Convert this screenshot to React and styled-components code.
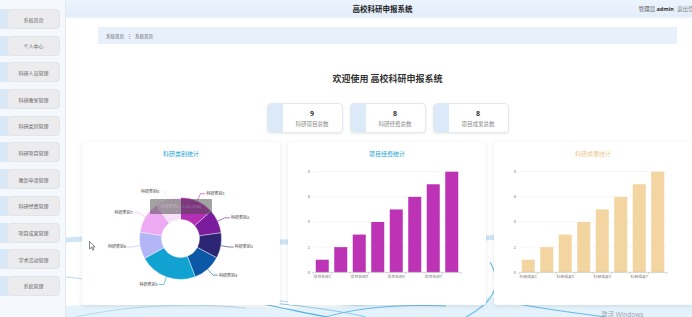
import styled, { createGlobalStyle } from "styled-components";

const GlobalStyle = createGlobalStyle`
  html, body {
    margin: 0;
    overflow: hidden;
    background: #fff;
    font-family: "Noto Sans CJK SC", "Noto Sans", sans-serif;
  }
`;

const menus = [
  "系统首页",
  "个人中心",
  "科研人员管理",
  "科研教室管理",
  "科研类别管理",
  "科研项目管理",
  "教案申请管理",
  "科研经费管理",
  "项目成果管理",
  "学术活动管理",
  "系统管理",
];

const stats = [
  { num: 9, label: "科研项目总数" },
  { num: 8, label: "科研经费总数" },
  { num: 8, label: "项目成果总数" },
];

const pieData = [
  { name: "科研类别1", from: 0, to: 48, color: "#b32fb4" },
  { name: "科研类别2", from: 48, to: 82, color: "#7a1c9d" },
  { name: "科研类别3", from: 82, to: 118, color: "#2c2573" },
  { name: "科研类别4", from: 118, to: 159, color: "#0b59a6" },
  { name: "科研类别5", from: 159, to: 241, color: "#12a2d2" },
  { name: "科研类别6", from: 241, to: 279, color: "#b2b6f6" },
  { name: "科研类别7", from: 279, to: 324, color: "#eea9f3" },
  { name: "科研类别8", from: 324, to: 360, color: "#f7e0f7" },
];

const Page = styled.div`
  display: flex;
  width: 709px;
  height: 317px;
  position: relative;
`;

const Sidebar = styled.aside`
  width: 66px;
  flex-shrink: 0;
  background: #f5f8fc;
  border-right: 1px solid #e1e8f1;
  padding-top: 9px;
  display: flex;
  flex-direction: column;
  gap: 6.7px;
  box-sizing: border-box;
`;

const MenuItem = styled.div`
  display: flex;
  height: 20px;
`;

const MenuTab = styled.div`
  width: 9px;
  margin-right: -2px;
  background: #d9e8f9;
  border-radius: 0 3px 3px 0;
`;

const MenuButton = styled.div`
  width: 53px;
  background: #ececef;
  border: 1px solid #e2e4e9;
  border-radius: 4px;
  box-sizing: border-box;
  display: flex;
  align-items: center;
  justify-content: center;
  font-size: 5px;
  color: #666;
  position: relative;
`;

const Main = styled.main`
  flex: 1;
  position: relative;
  background: #fff;
  overflow: hidden;
`;

const Content = styled.div`
  position: relative;
  z-index: 1;
`;

const Header = styled.header`
  height: 17px;
  background: linear-gradient(180deg, #ecf4fd, #e3edfa);
  display: grid;
  grid-template-columns: 1fr auto 1fr;
  align-items: center;
  padding-right: 10px;
  box-shadow: 0 1px 2px rgba(120, 150, 190, 0.15);
`;

const Title = styled.h1`
  grid-column: 2;
  margin: 0;
  font-size: 7.5px;
  font-weight: 700;
  color: #222;
`;

const User = styled.div`
  justify-self: end;
  font-size: 5.5px;
  color: #555;
  white-space: nowrap;
  b {
    color: #333;
    font-family: "Open Sans", sans-serif;
  }
  span {
    margin-left: 3px;
    color: #888;
  }
`;

const Crumb = styled.div`
  margin: 10px 32px 0;
  height: 17px;
  background: #e7f0fb;
  display: flex;
  align-items: center;
  padding-left: 8px;
  font-size: 4.5px;
  color: #666;
  gap: 3px;
`;

const Welcome = styled.h2`
  margin: 29px 0 0;
  text-align: center;
  font-size: 9px;
  line-height: 12px;
  font-weight: 700;
  color: #333;
`;

const StatRow = styled.div`
  display: flex;
  justify-content: center;
  gap: 7px;
  margin-top: 18px;
`;

const StatCard = styled.div`
  width: 76px;
  height: 30px;
  display: flex;
  border: 1px solid #e4e9ef;
  border-radius: 4px;
  overflow: hidden;
  box-sizing: border-box;
  box-shadow: 0 1px 3px rgba(0, 0, 0, 0.08);
  background: #fff;
`;

const StatSide = styled.div`
  width: 15px;
  background: #dbe9f9;
`;

const StatBody = styled.div`
  flex: 1;
  display: flex;
  flex-direction: column;
  align-items: center;
  justify-content: center;
  gap: 4px;
`;

const StatNum = styled.div`
  font-family: "Open Sans", sans-serif;
  font-size: 7px;
  line-height: 7px;
  font-weight: 700;
  color: #333;
`;

const StatLabel = styled.div`
  font-size: 5.5px;
  line-height: 6px;
  color: #888;
`;

const ChartRow = styled.div`
  display: flex;
  gap: 8px;
  margin-top: 9px;
  padding-left: 16px;
`;

const ChartCard = styled.section`
  width: 198px;
  height: 163px;
  flex-shrink: 0;
  background: #fff;
  border-radius: 3px;
  box-shadow: 0 1px 4px rgba(0, 0, 0, 0.1);
  padding-top: 9px;
  box-sizing: border-box;
`;

const ChartTitle = styled.div`
  text-align: center;
  font-size: 6px;
  line-height: 6px;
  color: ${(p) => p.color};
`;

const ChartSvg = styled.svg`
  display: block;
  margin-top: 5px;
  font-family: "Noto Sans CJK SC", sans-serif;
`;

const Backdrop = styled.svg`
  position: absolute;
  left: 0;
  top: 0;
  z-index: 0;
`;

const Watermark = styled.div`
  position: absolute;
  left: 601px;
  top: 309px;
  font-family: "Open Sans", "Noto Sans CJK SC", sans-serif;
  font-size: 6.5px;
  color: #9aa3ad;
  z-index: 2;
`;

const Cursor = styled.svg`
  position: absolute;
  left: 89px;
  top: 241px;
  z-index: 2;
`;

function pt(cx, cy, r, deg) {
  const a = (deg * Math.PI) / 180;
  return [cx + r * Math.sin(a), cy - r * Math.cos(a)];
}

function sector(cx, cy, r0, r1, a0, a1) {
  const [x1, y1] = pt(cx, cy, r1, a0);
  const [x2, y2] = pt(cx, cy, r1, a1);
  const [x3, y3] = pt(cx, cy, r0, a1);
  const [x4, y4] = pt(cx, cy, r0, a0);
  const big = a1 - a0 > 180 ? 1 : 0;
  return `M${x1} ${y1} A${r1} ${r1} 0 ${big} 1 ${x2} ${y2} L${x3} ${y3} A${r0} ${r0} 0 ${big} 0 ${x4} ${y4} Z`;
}

function PieChart() {
  const cx = 98.5;
  const cy = 76.5;
  return (
    <ChartSvg width="198" height="143">
      {pieData.map((d) => (
        <path
          key={d.name}
          d={sector(cx, cy, 19, 41, d.from, d.to)}
          fill={d.color}
          stroke="#fff"
          strokeWidth="0.4"
        />
      ))}
      {pieData.map((d) => {
        const mid = (d.from + d.to) / 2;
        const [ex, ey] = pt(cx, cy, 41, mid);
        const [ox, oy] = pt(cx, cy, 49, mid);
        const right = ox > cx;
        const hx = right ? ox + 5 : ox - 5;
        return (
          <g key={d.name + "l"}>
            <polyline
              points={`${ex},${ey} ${ox},${oy} ${hx},${oy}`}
              fill="none"
              stroke={d.color}
              strokeWidth="0.6"
            />
            <text
              x={right ? hx + 1 : hx - 1}
              y={oy + 1.4}
              fontSize="4"
              fill="#444"
              textAnchor={right ? "start" : "end"}
            >
              {d.name}
            </text>
          </g>
        );
      })}
      <rect x="68" y="37" width="62" height="15" rx="1" fill="rgba(70,70,70,0.5)" />
      <text x="99" y="46" fontSize="4" fill="rgba(255,255,255,0.35)" textAnchor="middle">
        科研类别1 : 1 (11.11%)
      </text>
    </ChartSvg>
  );
}

function BarChart(props) {
  const x0 = 25;
  const x1 = 173;
  const y0 = 110.3;
  const unit = 12.575;
  const step = (x1 - x0) / 8;
  const vals = [1, 2, 3, 4, 5, 6, 7, 8];
  return (
    <ChartSvg width="198" height="143">
      {[2, 4, 6, 8].map((v) => (
        <line key={v} x1={x0} x2={x1} y1={y0 - v * unit} y2={y0 - v * unit} stroke="#eeeeee" strokeWidth="0.6" />
      ))}
      {[0, 2, 4, 6, 8].map((v) => (
        <text key={"y" + v} x={x0 - 3} y={y0 - v * unit + 1.4} fontSize="4" fill="#777" textAnchor="end">
          {v}
        </text>
      ))}
      {vals.map((v, i) => (
        <rect
          key={i}
          x={x0 + step * i + (step - 13) / 2}
          y={y0 - v * unit}
          width="13"
          height={v * unit}
          fill={props.color}
        />
      ))}
      <line x1={x0} x2={x1} y1={y0} y2={y0} stroke="#b9b9b9" strokeWidth="0.6" />
      {Array.from({ length: 9 }).map((_, i) => (
        <line key={"t" + i} x1={x0 + step * i} x2={x0 + step * i} y1={y0} y2={y0 + 2} stroke="#b9b9b9" strokeWidth="0.6" />
      ))}
      {[0, 2, 4, 6].map((i) => (
        <text key={"x" + i} x={x0 + step * (i + 0.5)} y={y0 + 6} fontSize="3.8" fill="#777" textAnchor="middle">
          {props.prefix + (i + 1)}
        </text>
      ))}
    </ChartSvg>
  );
}

function Waves() {
  return (
    <Backdrop width="643" height="317">
      <path d="M0 240 C 120 232, 260 252, 420 238 S 600 226, 643 232" fill="none" stroke="#cfe5f8" strokeWidth="5" />
      <path d="M0 277 C 120 290, 300 322, 460 296 S 600 262, 643 270" fill="none" stroke="#9fd0ef" strokeWidth="0.8" />
      <path d="M0 317 L0 306 C 100 300, 200 314, 320 304 S 520 296, 643 306 L643 317 Z" fill="#e3f2fb" />
      <path d="M190 303 C 220 308, 240 314, 262 317" fill="none" stroke="#5db3e4" strokeWidth="1.2" />
      <path d="M205 303 C 240 306, 280 312, 300 317" fill="none" stroke="#8dcaee" strokeWidth="1" />
      <path d="M260 317 C 290 308, 330 304, 380 306" fill="none" stroke="#6bbbe8" strokeWidth="1" />
      <path d="M400 317 C 420 306, 440 290, 424 262" fill="none" stroke="#7ec3ea" strokeWidth="1.4" />
      <path d="M430 300 C 460 306, 500 312, 540 317" fill="none" stroke="#67b7e6" strokeWidth="1" />
      <path d="M10 317 C 60 306, 120 302, 180 308" fill="none" stroke="#b5dbf3" strokeWidth="1" />
    </Backdrop>
  );
}

export default function App() {
  return (
    <>
      <GlobalStyle />
      <Page>
        <Sidebar>
          {menus.map((m) => (
            <MenuItem key={m}>
              <MenuTab />
              <MenuButton>{m}</MenuButton>
            </MenuItem>
          ))}
        </Sidebar>
        <Main>
          <Waves />
          <Content>
            <Header>
              <Title>高校科研申报系统</Title>
              <User>
                管理员 <b>admin</b>
                <span>退出登录</span>
              </User>
            </Header>
            <Crumb>
              <span>系统首页</span>
              <span>⋮</span>
              <span>系统首页</span>
            </Crumb>
            <Welcome>欢迎使用 高校科研申报系统</Welcome>
            <StatRow>
              {stats.map((s) => (
                <StatCard key={s.label}>
                  <StatSide />
                  <StatBody>
                    <StatNum>{s.num}</StatNum>
                    <StatLabel>{s.label}</StatLabel>
                  </StatBody>
                </StatCard>
              ))}
            </StatRow>
            <ChartRow>
              <ChartCard>
                <ChartTitle color="#22a3d6">科研类别统计</ChartTitle>
                <PieChart />
              </ChartCard>
              <ChartCard>
                <ChartTitle color="#22a3d6">项目经费统计</ChartTitle>
                <BarChart color="#bd33b6" prefix="项目名称" />
              </ChartCard>
              <ChartCard>
                <ChartTitle color="#eec98c">科研成果统计</ChartTitle>
                <BarChart color="#f2d5a0" prefix="科研成果" />
              </ChartCard>
            </ChartRow>
          </Content>
        </Main>
        <Cursor width="7" height="10" viewBox="0 0 7 10">
          <path d="M0.5 0.5 L0.5 8 L2.4 6.3 L3.7 9.2 L4.9 8.7 L3.6 5.9 L6 5.9 Z" fill="#fff" stroke="#333" strokeWidth="0.6" />
        </Cursor>
        <Watermark>激活 Windows</Watermark>
      </Page>
    </>
  );
}
